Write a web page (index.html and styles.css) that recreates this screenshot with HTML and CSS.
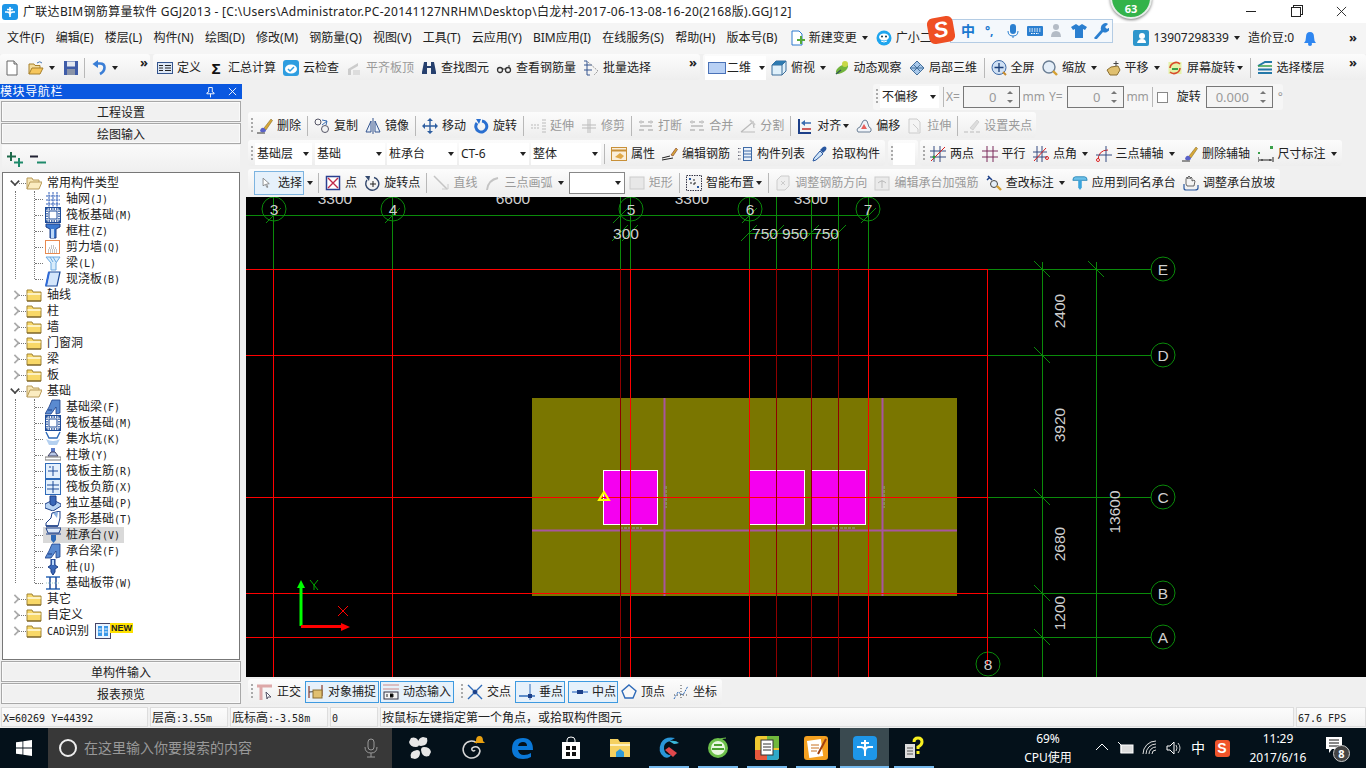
FILE: index.html
```html
<!DOCTYPE html>
<html>
<head>
  <title>广联达BIM钢筋算量软件 GGJ2013</title>
  <meta charset="UTF-8">
  <link rel="stylesheet" href="styles.css">
</head>
<body>
  <svg class="sprite" xmlns="http://www.w3.org/2000/svg">
    <!-- toolbar icons -->
    <symbol id="i-app" viewBox="0 0 16 16"><rect width="16" height="16" rx="3" fill="#1e96e8"/><path d="M8 3v10M3 8h2q3 0 3 3M13 8h-2q-3 0-3 3M5 5.500h6" stroke="#fff" stroke-width="1.600" fill="none"/></symbol>
    <symbol id="i-new" viewBox="0 0 16 16"><path d="M3 1h7l3 3v11H3z" fill="#fff" stroke="#666"/><path d="M10 1v3h3" fill="#ddd" stroke="#666"/></symbol>
    <symbol id="i-open" viewBox="0 0 16 16"><path d="M1 14V4h5l1 1.500h5V8" fill="#f3dc9c" stroke="#a8802a"/><path d="M1 14l3-6h11l-3 6z" fill="#f6c65c" stroke="#a8802a"/><path d="M9 3q3-2.500 5 0" stroke="#4a78b0" fill="none"/></symbol>
    <symbol id="i-save" viewBox="0 0 16 16"><rect x="1" y="1" width="14" height="14" fill="#3f5ca8"/><rect x="4" y="1.500" width="8" height="5" fill="#e4e8f0"/><rect x="4" y="9" width="8" height="6" fill="#8a94a8"/></symbol>
    <symbol id="i-undo" viewBox="0 0 16 16"><path d="M6 3.500h3q4.500 0 4.500 4T9 14" stroke="#3a7ed6" stroke-width="2.600" fill="none"/><path d="M7 0L1.500 4 7 8z" fill="#3a7ed6"/></symbol>
    <symbol id="i-define" viewBox="0 0 16 16"><rect x=".5" y="2.500" width="15" height="11" fill="#dce7f5" stroke="#34558f"/><path d="M2 5.500h4M2 8h4M2 10.500h4M8 5.500h6M8 8h6M8 10.500h6" stroke="#222"/></symbol>
    <symbol id="i-cloud" viewBox="0 0 16 16"><rect width="16" height="16" rx="3" fill="#2e9de0"/><ellipse cx="8" cy="9" rx="6" ry="4.500" fill="#fff"/><path d="M5 9l2 2 4-4" stroke="#2e9de0" stroke-width="1.500" fill="none"/></symbol>
    <symbol id="i-flush" viewBox="0 0 16 16"><path d="M2 9l10-6v3L5 10v5H2z" fill="#ccc"/><rect x="7" y="10" width="7" height="5" fill="#ddd"/></symbol>
    <symbol id="i-binoc" viewBox="0 0 16 16"><path d="M3 2h3v4h4V2h3l2 10v2h-5V8H6v6H1v-2z" fill="#26406e"/></symbol>
    <symbol id="i-glass" viewBox="0 0 16 16"><circle cx="4" cy="10" r="2.500" fill="none" stroke="#333" stroke-width="1.300"/><circle cx="12" cy="10" r="2.500" fill="none" stroke="#333" stroke-width="1.300"/><path d="M6 9h4M13 7V5" stroke="#333"/></symbol>
    <symbol id="i-batch" viewBox="0 0 16 16"><path d="M1 1h3v14h3M1 5h8M1 10h8" stroke="#34558f" fill="none"/><path d="M5 2l10 9-4 4" stroke="#999" stroke-dasharray="2 1" fill="none"/></symbol>
    <symbol id="i-2d" viewBox="0 0 18 16"><rect x=".5" y="2.500" width="17" height="11" fill="#b8d0f4" stroke="#4a72b8"/></symbol>
    <symbol id="i-box" viewBox="0 0 16 16"><path d="M1 5l4-4h10v10l-4 4H1z" fill="#dff0fa" stroke="#3b6d99"/><path d="M1 5h10v10M11 5l4-4" stroke="#3b6d99" fill="none"/><path d="M1 5l4-4h10l-4 4z" fill="#2e7ab0"/></symbol>
    <symbol id="i-orbit" viewBox="0 0 16 16"><ellipse cx="8" cy="9" rx="7" ry="3.500" transform="rotate(-35 8 9)" fill="#72b43c"/><circle cx="11" cy="4" r="3" fill="#c8d848"/><path d="M2 14l5-4" stroke="#355" stroke-width="1.500"/></symbol>
    <symbol id="i-local3d" viewBox="0 0 16 16"><path d="M8 1l7 7-7 7-7-7z" fill="#a8c8ea" stroke="#44709c"/><path d="M4.500 4.500l7 7M11.500 4.500l-7 7M1 8h14" stroke="#44709c"/></symbol>
    <symbol id="i-full" viewBox="0 0 16 16"><circle cx="8" cy="7.500" r="7" fill="#cfe0f4" stroke="#3e6aa6"/><path d="M8 3v9M3.500 7.500h9" stroke="#1c3f78" stroke-width="1.300"/><path d="M12 12l3 3" stroke="#c68a2c" stroke-width="2"/></symbol>
    <symbol id="i-zoom" viewBox="0 0 16 16"><circle cx="7" cy="7" r="6" fill="#e4eef8" stroke="#6a7e94" stroke-width="1.400"/><path d="M11 11l4 4" stroke="#d6a030" stroke-width="2.400"/></symbol>
    <symbol id="i-pan" viewBox="0 0 16 16"><path d="M2 10l4-3 7-1 2 4-3 5H5z" fill="#e0c070" stroke="#8a6e30"/><path d="M11 1v5M8.500 3.500h5" stroke="#444"/></symbol>
    <symbol id="i-screen" viewBox="0 0 16 16"><rect x="1.500" y="2" width="13" height="12" fill="#e4f2a8"/><path d="M3 8a6 6 0 0 1 10-4M13 8a6 6 0 0 1-10 4" stroke="#d84a2c" stroke-width="1.600" fill="none"/><path d="M5 9h6" stroke="#3aa04a" stroke-width="2"/></symbol>
    <symbol id="i-floor" viewBox="0 0 16 16"><path d="M1 6l7-4h7M1 9.500h14M1 13h14" stroke="#2478a8" stroke-width="2" fill="none"/><path d="M1 6h14" stroke="#3aa04a" stroke-width="1.500"/></symbol>
    <symbol id="i-brush" viewBox="0 0 16 16"><path d="M7 10L14 1l1.500 1.500L9 12z" fill="#d8a838" stroke="#7a6020" stroke-width=".5"/><path d="M3 13q1-4 4-3l2 2q0 3-5 2z" fill="#5a62c8"/><path d="M0 15h8" stroke="#333"/></symbol>
    <symbol id="i-copy" viewBox="0 0 16 16"><circle cx="4" cy="4" r="3" fill="none" stroke="#556"/><circle cx="11" cy="11" r="3.500" fill="none" stroke="#556"/><path d="M8 2l5 1-1 4M8 7l5-4" stroke="#3a6cb0" fill="none"/></symbol>
    <symbol id="i-mirror" viewBox="0 0 16 16"><path d="M6 3L1 14h5zM10 3l5 11h-5z" fill="#e8f0fa" stroke="#34558f"/><path d="M8 0v16" stroke="#34558f"/></symbol>
    <symbol id="i-move" viewBox="0 0 16 16"><path d="M8 1v14M1 8h14" stroke="#2e5ea0" stroke-width="1.400"/><path d="M8 0l3 3H5zM8 16l3-3H5zM0 8l3-3v6zM16 8l-3-3v6z" fill="#2e5ea0"/></symbol>
    <symbol id="i-rotate" viewBox="0 0 16 16"><path d="M9 3a5.500 5.500 0 1 1-5 2" stroke="#2a6fd0" stroke-width="3" fill="none"/><path d="M3 1l5 0-2 5z" fill="#2a6fd0"/></symbol>
    <symbol id="i-extend" viewBox="0 0 16 16"><path d="M13 1v14M15 1v14M1 7h9M1 10h9" stroke="#bbb" stroke-dasharray="2 1"/></symbol>
    <symbol id="i-trim" viewBox="0 0 16 16"><path d="M7 1v14M9 1v14M1 7h14M1 10h14" stroke="#bbb"/></symbol>
    <symbol id="i-break" viewBox="0 0 16 16"><path d="M1 4h5M10 4h5M1 12h5M10 12h5M2 8h12" stroke="#bbb" stroke-width="1.500"/><path d="M3 2v4M13 2v4" stroke="#ccc"/></symbol>
    <symbol id="i-split" viewBox="0 0 16 16"><path d="M1 14h14M1 14L13 4l1 6" stroke="#bbb" stroke-width="1.200" fill="none"/><path d="M10 2l5 5" stroke="#ccc" stroke-width="2"/></symbol>
    <symbol id="i-align" viewBox="0 0 16 16"><path d="M2 1v14h12" stroke="#1c3f88" stroke-width="2" fill="none"/><path d="M6 5h8" stroke="#3a6cb0" stroke-width="1.500"/><path d="M5 11h9" stroke="#c02a2a" stroke-width="1.500"/><path d="M4 5l4-3v6z" fill="#3a6cb0"/></symbol>
    <symbol id="i-offset" viewBox="0 0 16 16"><path d="M1 12q0-2 3-3l3-6q2-2 4 0l2 6q3 1 2 4l-1 1H2z" fill="#f0f4fa" stroke="#6a7e94"/><path d="M5 11l3-5 3 5z" fill="#e8605c"/></symbol>
    <symbol id="i-stretch" viewBox="0 0 16 16"><path d="M2 1h8l3 3v11H2z" fill="#f4f4f4" stroke="#ccc"/><path d="M6 6l5 5v3" stroke="#ccc" fill="none"/></symbol>
    <symbol id="i-grip" viewBox="0 0 16 16"><path d="M6 10l7-8 2 2-6 8z" fill="#ddd" stroke="#bbb" stroke-width=".5"/><path d="M0 14h4M6 14h4M12 14h4" stroke="#bbb"/></symbol>
    <symbol id="i-attr" viewBox="0 0 16 16"><rect x=".5" y="1.500" width="15" height="13" fill="#faeeda" stroke="#c89038"/><path d="M1 4.500h14" stroke="#c89038" stroke-width="2"/><path d="M4 11l5-4 4 3-3 3z" fill="#e0a848"/></symbol>
    <symbol id="i-editbar" viewBox="0 0 16 16"><path d="M9 9l5-7 1.500 1.500L11 10z" fill="#d8a838" stroke="#7a3020" stroke-width=".6"/><path d="M0 12l8-2M0 14l11-2" stroke="#222"/></symbol>
    <symbol id="i-list" viewBox="0 0 16 16"><path d="M1 2.500h3M1 6h3M1 9.500h3M1 13h3" stroke="#556" stroke-dasharray="1.500 1"/><rect x="6.500" y="1.500" width="8" height="13" fill="#e8f0fa" stroke="#3e6aa6"/><path d="M6.500 5h8M6.500 8h8M6.500 11h8" stroke="#3e6aa6"/></symbol>
    <symbol id="i-pick" viewBox="0 0 16 16"><path d="M1 15l1-3 6-7 3 3-7 6z" fill="#cfe4f8" stroke="#2a58a0"/><path d="M8 4l3-3q2-1 3 0t0 3l-3 3z" fill="#2a58a0"/></symbol>
    <symbol id="i-twopt" viewBox="0 0 16 16"><path d="M4 0v16M10 0v16M0 5h16M0 11h16" stroke="#344a80"/><path d="M1 15L15 1" stroke="#d82020"/><circle cx="4" cy="11" r="1.500" fill="#2a9a3a"/></symbol>
    <symbol id="i-para" viewBox="0 0 16 16"><path d="M5 0v16M11 0v16M0 5h16M0 11h16" stroke="#7a2a5a"/></symbol>
    <symbol id="i-angle" viewBox="0 0 16 16"><path d="M4 0v16M9 0v16M0 6h14M0 11h14" stroke="#344a80"/><path d="M1 15L13 2" stroke="#d82020"/><circle cx="14" cy="12" r="1.500" fill="none" stroke="#d82020"/></symbol>
    <symbol id="i-arc3" viewBox="0 0 16 16"><path d="M2 15q0-11 10-11" stroke="#d82020" fill="none"/><path d="M0 9h16M10 0v16" stroke="#344a80"/><circle cx="2" cy="14" r="1.500" fill="#fff" stroke="#d82020"/></symbol>
    <symbol id="i-dim" viewBox="0 0 16 16"><path d="M0 11v5M15 11v5M1 14h13" stroke="#222"/><rect x="0" y="6" width="2" height="2" fill="#3aa04a"/><rect x="12" y="0" width="3" height="3" fill="#3aa04a"/><path d="M5 14l-2 0M11 14h2" stroke="#222"/></symbol>
    <symbol id="i-cursor" viewBox="0 0 16 16"><path d="M3 1l9 8-4 .5 2 4.500-1.500.5-2-4.500L3 12z" fill="#fff" stroke="#666"/></symbol>
    <symbol id="i-point" viewBox="0 0 16 16"><rect x="1.500" y="1.500" width="13" height="13" fill="#fff" stroke="#2a3f90" stroke-width="1.500"/><path d="M3 3l10 10M13 3L3 13" stroke="#c02a4a" stroke-width="1.400"/></symbol>
    <symbol id="i-rotpt" viewBox="0 0 16 16"><path d="M10 2.500a6.500 6.500 0 1 1-7 2.500" stroke="#34496e" stroke-width="1.400" fill="none"/><path d="M1 1l5 0-1 5z" fill="#34496e"/><path d="M9 6v6M6 9h6" stroke="#222"/></symbol>
    <symbol id="i-line" viewBox="0 0 16 16"><path d="M1 1l13 13" stroke="#c4c4c4" stroke-width="1.500"/><path d="M9 14h6V9" stroke="#ccc" fill="none"/></symbol>
    <symbol id="i-arc" viewBox="0 0 16 16"><path d="M2 15q1-10 11-12" stroke="#c4c4c4" stroke-width="2" fill="none"/></symbol>
    <symbol id="i-rect" viewBox="0 0 16 16"><rect x="1" y="2" width="14" height="12" fill="#e8e8e8" stroke="#ccc"/></symbol>
    <symbol id="i-smart" viewBox="0 0 16 16"><rect x=".5" y=".5" width="15" height="15" fill="#f4f4f4" stroke="#334" stroke-dasharray="1.500 1"/><path d="M8 4v8M4 8h8" stroke="#222" stroke-dasharray="2 2"/><rect x="3" y="3" width="2" height="2" fill="#2a58a0"/><rect x="11" y="11" width="2" height="2" fill="#2a58a0"/></symbol>
    <symbol id="i-adjust" viewBox="0 0 16 16"><path d="M2 5l4-4h8v10l-4 4H2z" fill="#eee" stroke="#ccc"/><path d="M6 6l4 4M10 6l-4 4" stroke="#ccc"/></symbol>
    <symbol id="i-editcap" viewBox="0 0 16 16"><rect x="1" y="2" width="14" height="13" fill="#eaeaea" stroke="#ccc"/><path d="M8 5v8M4 8q4-4 8 0" stroke="#bbb" fill="none"/></symbol>
    <symbol id="i-check" viewBox="0 0 16 16"><path d="M2 1l4 4M1 5l3-3" stroke="#1c3f88" stroke-width="1.500"/><circle cx="8" cy="9" r="3.500" fill="#e4eef8" stroke="#444"/><path d="M11 11l4 4" stroke="#d6a030" stroke-width="2.400"/></symbol>
    <symbol id="i-apply" viewBox="0 0 18 16"><path d="M1 5q0-4 3-4h10q3 0 3 4z" fill="#6cc0e8" stroke="#2a86b8"/><path d="M7 5h4v8l-2 3-2-3z" fill="#3aa4dc"/></symbol>
    <symbol id="i-hand" viewBox="0 0 16 16"><path d="M3 9V4l1-2 1 2V2l1-1 1 1v2l1-2 1 1v3l2-1 1 1-1 5H4z" fill="#f4f4f4" stroke="#444" stroke-width=".8"/><path d="M1 9v4q0 2 2 2h9q3 0 3-2v-3" stroke="#2a58a0" stroke-width="1.200" fill="none"/></symbol>
    <symbol id="i-ortho" viewBox="0 0 16 16"><path d="M0 2h15M4 2v14" stroke="#dda8a8" stroke-width="3"/><path d="M9 8l5 5-3 0-1 2z" fill="#fff" stroke="#556"/></symbol>
    <symbol id="i-snap" viewBox="0 0 16 16"><path d="M1 2v12M14 1v11" stroke="#8a3a2a" stroke-width="1.200"/><path d="M1 8l13-1" stroke="#444"/><rect x="5" y="6" width="9" height="8" fill="#e0c070" stroke="#8a6e30"/></symbol>
    <symbol id="i-dyn" viewBox="0 0 16 16"><path d="M0 1h16M0 5h16" stroke="#c88"/><rect x="1" y="8" width="14" height="7" fill="#f4f4f4" stroke="#334"/><path d="M4 10v3M7 10h3v3h-3" stroke="#222"/></symbol>
    <symbol id="i-cross" viewBox="0 0 16 16"><path d="M1 1l14 14M15 1L1 15" stroke="#2e6ab8" stroke-width="1.400"/><rect x="6" y="6" width="4" height="4" fill="#1c3f88" transform="rotate(45 8 8)"/></symbol>
    <symbol id="i-perp" viewBox="0 0 16 16"><path d="M0 12h16" stroke="#2e6ab8" stroke-width="1.500"/><path d="M11 0v16" stroke="#2e6ab8"/><rect x="9" y="10" width="4" height="4" fill="#1c3f88"/></symbol>
    <symbol id="i-mid" viewBox="0 0 16 16"><path d="M0 8h16" stroke="#5a8ad0" stroke-width="1.500"/><rect x="5" y="6" width="6" height="4" fill="#1c3f88"/></symbol>
    <symbol id="i-vertex" viewBox="0 0 16 16"><path d="M8 1l7 6-3 7H4L1 7z" fill="#f8f8f8" stroke="#2e6ab8" stroke-width="1.400"/></symbol>
    <symbol id="i-coord" viewBox="0 0 16 16"><path d="M1 15l4-7 5 3 5-9" stroke="#2e6ab8" stroke-dasharray="2 1" fill="none"/><path d="M8 1v15M1 11h14" stroke="#444" stroke-dasharray="1 2"/></symbol>
    <symbol id="i-pages" viewBox="0 0 16 16"><path d="M3 1h7l3 3v11H3z" fill="#fff" stroke="#2e7ad0"/><path d="M8 9h3V6h2v3h3v2h-3v3h-2v-3H8z" fill="#56a83a"/></symbol>
    <symbol id="i-robot" viewBox="0 0 16 16"><circle cx="8" cy="8" r="7.500" fill="#1ea5ee"/><ellipse cx="8" cy="7" rx="5" ry="3.500" fill="#fff"/><circle cx="6" cy="6.500" r="1" fill="#134"/><circle cx="10" cy="6.500" r="1" fill="#134"/><path d="M5 11q3 2 6 0" stroke="#fff" fill="none"/></symbol>
    <symbol id="i-user" viewBox="0 0 16 16"><rect width="16" height="16" rx="2" fill="#2e96cc"/><circle cx="9" cy="6" r="3" fill="#fff"/><path d="M4 13q1-4 5-4t4 4z" fill="#fff"/></symbol>
    <symbol id="i-bell" viewBox="0 0 16 16"><path d="M2 13q2-2 2-6 0-5 4-5t4 5q0 4 2 6z" fill="#2e86f0"/><circle cx="8" cy="14" r="2" fill="#2e86f0"/></symbol>
    <symbol id="i-plus2" viewBox="0 0 16 16"><path d="M4 1v9M0 5.500h9" stroke="#1e6a4a" stroke-width="2"/><path d="M12 7v9M7 11.500h9" stroke="#1e8a6a" stroke-width="2"/></symbol>
    <symbol id="i-minus2" viewBox="0 0 16 16"><path d="M0 5.500h8" stroke="#223" stroke-width="2"/><path d="M7 11.500h9" stroke="#1e8a6a" stroke-width="2"/></symbol>
    <!-- tree icons -->
    <symbol id="t-open" viewBox="0 0 16 16"><path d="M1 14V3h5l1 2h6v2" fill="#f7e6b4" stroke="#b89a58"/><path d="M1 14l3-7h12l-3 7z" fill="#fbecc0" stroke="#b89a58"/></symbol>
    <symbol id="t-folder" viewBox="0 0 16 16"><path d="M1 3h5l1 2h8v9H1z" fill="#f8d868" stroke="#a08438"/><path d="M1.500 6h13v2h-13z" fill="#fdf2c4"/><path d="M1 14h14" stroke="#6a5420"/></symbol>
    <symbol id="t-grid" viewBox="0 0 16 16"><path d="M1 5h14M1 9h14M1 13h14M4 1v15M8 1v15M12 1v15" stroke="#2e5cb8" stroke-dasharray="2 .5"/></symbol>
    <symbol id="t-raft" viewBox="0 0 16 16"><rect x=".5" y=".5" width="15" height="15" fill="#fff" stroke="#1c4a98"/><rect x="4" y="4" width="8" height="8" fill="#fff" stroke="#1c4a98"/><path d="M2 1v14M14 1v14M1 2h14M1 14h14" stroke="#1c4a98" stroke-width="1.400" stroke-dasharray="1.500 1"/></symbol>
    <symbol id="t-col" viewBox="0 0 16 16"><path d="M1 1h14v3l-4 2v9H5V6L1 4z" fill="#3a78d0" stroke="#1c3f88"/><path d="M6 6h3v9H6z" fill="#bcd8f8"/></symbol>
    <symbol id="t-wall" viewBox="0 0 16 16"><rect x=".5" y="1.500" width="14" height="13" fill="#fff" stroke="#e88a50"/><path d="M3 11h9M4 9h7M6 7h3M3 13h10" stroke="#888" stroke-dasharray="1 1"/></symbol>
    <symbol id="t-beam" viewBox="0 0 16 16"><path d="M1 2h14L11 8v7H6V8z" fill="#d8ecfb" stroke="#6aa8e0"/><path d="M8 2l3 5M5 2l3 5" stroke="#6aa8e0"/></symbol>
    <symbol id="t-slab" viewBox="0 0 16 16"><path d="M4 1h11l-3 14H1z" fill="#d4e6fb" stroke="#1c4a98" stroke-width="1.200"/><path d="M1 15L4 1" stroke="#2e6ad8" stroke-width="2"/></symbol>
    <symbol id="t-fbeam" viewBox="0 0 16 16"><path d="M0 15l4-7 3-7h8v13l-4 1V8L6 15z" fill="#5a8ad0" stroke="#1c3f88" stroke-width=".8"/><path d="M3 11h4" stroke="#1c3f88"/></symbol>
    <symbol id="t-pit" viewBox="0 0 16 16"><path d="M1 1l3 6h8l3-6" stroke="#2e6ab8" stroke-width="1.400" fill="none"/><path d="M1 8q7 4 14 0l-3 6H4z" fill="#b4d0f0"/></symbol>
    <symbol id="t-pier" viewBox="0 0 16 16"><path d="M6 1h4v4H6z" fill="#5a7ac8"/><path d="M3 9l3-4h4l3 4z" fill="#b8c8e8" stroke="#446"/><path d="M0 10h16v3H0z" fill="#fff" stroke="#777"/></symbol>
    <symbol id="t-rmain" viewBox="0 0 16 16"><rect x=".5" y=".5" width="15" height="15" fill="#e4f0fc" stroke="#2e6ab8"/><path d="M8 3v10M3 8h10M5 3v2" stroke="#1c4a98"/></symbol>
    <symbol id="t-rneg" viewBox="0 0 16 16"><rect x=".5" y=".5" width="15" height="15" fill="#e4f0fc" stroke="#2e6ab8"/><path d="M8 2v12M2 6h12M2 10h12" stroke="#1c4a98"/></symbol>
    <symbol id="t-iso" viewBox="0 0 16 16"><path d="M0 9l8-4 8 4v2l-8 5-8-3z" fill="#b8d4f4" stroke="#1c3f88"/><path d="M5 1h6v8l-3 2-3-2z" fill="#3a68b8" stroke="#1c3f88"/></symbol>
    <symbol id="t-strip" viewBox="0 0 16 16"><path d="M1 15v-3l5-5 1-5 8-2v7l-2 8z" fill="#fff" stroke="#1c3f88"/><path d="M8 2l5-1-1 6z" fill="#8ab0e0"/><path d="M1 15h12" stroke="#1c3f88" stroke-width="1.500"/></symbol>
    <symbol id="t-cap" viewBox="0 0 16 16"><path d="M1 1h15l-2 5H3z" fill="#dbe8f8" stroke="#1c3f88"/><path d="M1 7h15" stroke="#1c3f88"/><path d="M6 8h5v5l-2.500 3L6 13z" fill="#2e6ab8"/></symbol>
    <symbol id="t-pile" viewBox="0 0 16 16"><path d="M6 0h4v6l3 2-3 2v3l-2 3-2-3v-3L3 8l3-2z" fill="#3a68b8" stroke="#1c3f88"/><path d="M7 1h2v5H7z" fill="#bcd8f8"/></symbol>
    <symbol id="t-band" viewBox="0 0 16 16"><path d="M1 2h14M1 14h14" stroke="#2e6ab8" stroke-width="1.500"/><path d="M5 2v12M11 2v12" stroke="#1c4a98" stroke-width="1.500"/><path d="M1 8h14" stroke="#9cc" stroke-dasharray="1 1"/></symbol>
    <symbol id="t-cad" viewBox="0 0 16 16"><rect x=".5" y=".5" width="15" height="15" fill="#eaf4ff" stroke="#446"/><rect x="3" y="3" width="4" height="10" fill="#3a98e8"/><rect x="9" y="3" width="4" height="10" fill="#3a98e8"/><path d="M3.500 6h3M3.500 9h3M9.500 6h3M9.500 9h3" stroke="#fff"/></symbol>
    <!-- taskbar icons -->
    <symbol id="b-fan" viewBox="0 0 24 24"><path d="M4 2q7-2 8 6 0 3-3 3Q3 11 2 6zM20 2q2 7-6 8-3 0-3-3 0-5 5-6zM22 20q-7 2-8-6 0-3 3-3 6 0 7 5zM4 22q-2-7 6-8 3 0 3 3 0 5-5 6z" fill="#e6e6e6"/></symbol>
    <symbol id="b-swirl" viewBox="0 0 24 24"><path d="M16 7a8.500 8.500 0 1 0 3 8q-1-5-6-4-3 1-2 3 2 2 3 0" stroke="#d8d8d8" stroke-width="1.500" fill="none"/><path d="M14 10q0-5 3.500-5T21 10l2 2H12z" fill="#e8a010" transform="translate(1 -5)"/></symbol>
    <symbol id="b-edge" viewBox="0 0 24 24"><path d="M2 13Q2 2 13 2q10 0 10 12H8q1 5 6 5 4 0 7-2v4q-3 2-8 2Q2 23 2 13zm6-3h9q0-4-4-4-4 0-5 4z" fill="#0a78d8"/></symbol>
    <symbol id="b-store" viewBox="0 0 24 24"><path d="M8 6V4q0-3 4-3t4 3v2" stroke="#fff" fill="none"/><path d="M3 6h18v17H3z" fill="#fff"/><path d="M7 10h4v4H7zM13 10h4v4h-4zM7 16h4v4H7zM13 16h4v4h-4z" fill="#111"/></symbol>
    <symbol id="b-files" viewBox="0 0 24 24"><path d="M2 3h8l2 3h10v15H2z" fill="#f4d060"/><path d="M2 8h20v2H2z" fill="#fdf0c0"/><path d="M8 21v-5l4-3 4 3v5z" fill="#2e9ad8"/></symbol>
    <symbol id="b-gl" viewBox="0 0 24 24"><path d="M18 2q-10-2-14 5-4 9 3 14 5 2 7-2-6 0-7-6-1-6 6-8z" fill="#2a96d8"/><path d="M8 14l8 7 4-4-8-6z" fill="#e0484c"/><path d="M12 5q7-1 10 2-3 1-5 1z" fill="#3ab8d8"/></symbol>
    <symbol id="b-ie" viewBox="0 0 24 24"><circle cx="12" cy="12" r="10" fill="#6cc04a"/><circle cx="12" cy="12" r="7" fill="#e8f8e0"/><path d="M6 13h12M8 9h8" stroke="#4aa030" stroke-width="2"/><path d="M20 2q-4 0-8 2" stroke="#6cc04a" fill="none"/></symbol>
    <symbol id="b-pic" viewBox="0 0 24 24"><rect width="24" height="24" rx="3" fill="#f0c830"/><path d="M0 14h12v10H3q-3 0-3-3z" fill="#e8583c"/><path d="M12 14h12v7q0 3-3 3h-9z" fill="#2ea8c8"/><path d="M12 0h12v12H12z" fill="#70b83c"/><rect x="6" y="4" width="12" height="15" fill="#fff" stroke="#333"/><path d="M8 8h8M8 11h8M8 14h8" stroke="#333"/></symbol>
    <symbol id="b-notes" viewBox="0 0 24 24"><rect width="24" height="24" rx="3" fill="#f4a020"/><rect x="4" y="4" width="14" height="17" fill="#fff" transform="rotate(-8 11 12)"/><path d="M7 9h8M7 12h8M7 15h6" stroke="#c87020"/><path d="M14 18L22 3" stroke="#a04010" stroke-width="2"/></symbol>
    <symbol id="b-app" viewBox="0 0 24 24"><rect width="24" height="24" rx="4" fill="#1e96e8"/><path d="M12 4v16M4 11h4q4 0 4 5 0-5 4-5h4M8 7h8" stroke="#fff" stroke-width="2" fill="none"/></symbol>
    <symbol id="b-help" viewBox="0 0 24 24"><rect x="3" y="8" width="10" height="14" fill="#ddd"/><path d="M5 12h6M5 15h6M5 18h6" stroke="#555"/><path d="M12 6q0-4 4-4t4 4q0 3-4 5v2" stroke="#f8f020" stroke-width="3" fill="none"/><rect x="14.500" y="15" width="3" height="3" fill="#f8f020"/></symbol>
  </svg>

  <div class="title-bar">
    <svg class="ic title-icon"><use href="#i-app"/></svg>
    <span class="title-text">广联达BIM钢筋算量软件 GGJ2013 - [C:\Users\Administrator.PC-20141127NRHM\Desktop\白龙村-2017-06-13-08-16-20(2168版).GGJ12]</span>
    <div class="win-controls">
      <span class="win-min"></span>
      <span class="win-max"></span>
      <svg class="win-close" viewBox="0 0 12 12"><path d="M1 1l10 10M11 1L1 11" stroke="#222"/></svg>
    </div>
  </div>

  <div class="score-badge"><span>63</span></div>

  <div class="menu-bar">
    <span class="menu-item">文件(F)</span>
    <span class="menu-item">编辑(E)</span>
    <span class="menu-item">楼层(L)</span>
    <span class="menu-item">构件(N)</span>
    <span class="menu-item">绘图(D)</span>
    <span class="menu-item">修改(M)</span>
    <span class="menu-item">钢筋量(Q)</span>
    <span class="menu-item">视图(V)</span>
    <span class="menu-item">工具(T)</span>
    <span class="menu-item">云应用(Y)</span>
    <span class="menu-item">BIM应用(I)</span>
    <span class="menu-item">在线服务(S)</span>
    <span class="menu-item">帮助(H)</span>
    <span class="menu-item">版本号(B)</span>
    <span class="tool"><svg class="ic"><use href="#i-pages"/></svg>新建变更<i class="caret"></i></span>
    <span class="tool"><svg class="ic"><use href="#i-robot"/></svg>广小二</span>
    <div class="menu-right">
      <span class="tool"><svg class="ic"><use href="#i-user"/></svg>13907298339<i class="caret"></i></span>
      <span class="tool">造价豆:0</span>
      <svg class="ic bell"><use href="#i-bell"/></svg>
      <span class="more">»</span>
    </div>
  </div>

  <div class="ime-bar">
    <span class="ime-logo">S</span>
    <span class="ime-zh">中</span>
    <span class="ime-dot">°,</span>
    <svg class="ime-ic" viewBox="0 0 16 16"><rect x="5" y="1" width="6" height="10" rx="3" fill="#2a7fd0"/><path d="M3 8q0 5 5 5t5-5M8 13v2" stroke="#2a7fd0" fill="none"/></svg>
    <svg class="ime-ic" viewBox="0 0 16 16"><rect y="3" width="16" height="10" rx="1" fill="#2a7fd0"/><path d="M2 6h12M2 8h12M4 10.500h8" stroke="#fff" stroke-dasharray="1.500 1"/></svg>
    <svg class="ime-ic" viewBox="0 0 16 16"><circle cx="7" cy="4" r="3" fill="#b4bcc6"/><path d="M2 14q0-6 5-6t5 6z" fill="#b4bcc6"/></svg>
    <svg class="ime-ic" viewBox="0 0 16 16"><path d="M5 1L0 4l2 3 2-1v9h8V6l2 1 2-3-5-3-3 2z" fill="#2a7fd0"/></svg>
    <svg class="ime-ic" viewBox="0 0 16 16"><path d="M1 15l7-8q-1-4 2-6t5 0l-3 3 2 2 3-2q0 4-3 5-2 1-4 0l-7 8z" fill="#2a7fd0"/></svg>
  </div>

  <div class="tool-row">
    <div class="tool-group group-file">
      <svg class="ic"><use href="#i-new"/></svg>
      <span class="tool"><svg class="ic"><use href="#i-open"/></svg><i class="caret"></i></span>
      <svg class="ic"><use href="#i-save"/></svg>
      <i class="sep"></i>
      <span class="tool"><svg class="ic"><use href="#i-undo"/></svg><i class="caret"></i></span>
      <span class="more">»</span>
    </div>
    <div class="tool-group group-main">
      <span class="tool"><svg class="ic"><use href="#i-define"/></svg>定义</span>
      <span class="tool"><span class="sigma">Σ</span>汇总计算</span>
      <span class="tool"><svg class="ic"><use href="#i-cloud"/></svg>云检查</span>
      <span class="tool off"><svg class="ic"><use href="#i-flush"/></svg>平齐板顶</span>
      <span class="tool"><svg class="ic"><use href="#i-binoc"/></svg>查找图元</span>
      <span class="tool"><svg class="ic"><use href="#i-glass"/></svg>查看钢筋量</span>
      <span class="tool"><svg class="ic"><use href="#i-batch"/></svg>批量选择</span>
      <span class="more">»</span>
    </div>
    <div class="tool-group group-view">
      <span class="view-combo"><svg class="ic wide"><use href="#i-2d"/></svg>二维<i class="caret"></i></span>
      <span class="tool"><svg class="ic"><use href="#i-box"/></svg>俯视<i class="caret"></i></span>
      <span class="tool"><svg class="ic"><use href="#i-orbit"/></svg>动态观察</span>
      <span class="tool"><svg class="ic"><use href="#i-local3d"/></svg>局部三维</span>
      <i class="sep"></i>
      <span class="tool"><svg class="ic"><use href="#i-full"/></svg>全屏</span>
      <span class="tool"><svg class="ic"><use href="#i-zoom"/></svg>缩放<i class="caret"></i></span>
      <span class="tool"><svg class="ic"><use href="#i-pan"/></svg>平移<i class="caret"></i></span>
      <span class="tool"><svg class="ic"><use href="#i-screen"/></svg>屏幕旋转<i class="caret tight"></i></span>
      <i class="sep"></i>
      <span class="tool"><svg class="ic"><use href="#i-floor"/></svg>选择楼层</span>
      <span class="more">»</span>
    </div>
  </div>

  <div class="workspace">
    <div class="nav-panel">
      <div class="nav-head">
        <span>模块导航栏</span>
        <svg class="nav-pin" viewBox="0 0 10 12"><path d="M3 1h4v5l2 1v1H1V7l2-1zM5 8v4" stroke="#fff" fill="none"/></svg>
        <svg class="nav-close" viewBox="0 0 10 10"><path d="M1 1l8 8M9 1L1 9" stroke="#fff"/></svg>
      </div>
      <div class="nav-btn">工程设置</div>
      <div class="nav-btn">绘图输入</div>
      <div class="tree-tools">
        <svg class="ic"><use href="#i-plus2"/></svg>
        <svg class="ic"><use href="#i-minus2"/></svg>
      </div>
      <div class="tree">
        <div class="tree-row"><i class="chev down"></i><i class="dots"></i><svg class="ic"><use href="#t-open"/></svg><span>常用构件类型</span></div>
        <div class="tree-kids">
          <div class="tree-leaf"><span class="leaf-body"><svg class="ic"><use href="#t-grid"/></svg><span>轴网<span class="lat">(J)</span></span></span></div>
          <div class="tree-leaf"><span class="leaf-body"><svg class="ic"><use href="#t-raft"/></svg><span>筏板基础<span class="lat">(M)</span></span></span></div>
          <div class="tree-leaf"><span class="leaf-body"><svg class="ic"><use href="#t-col"/></svg><span>框柱<span class="lat">(Z)</span></span></span></div>
          <div class="tree-leaf"><span class="leaf-body"><svg class="ic"><use href="#t-wall"/></svg><span>剪力墙<span class="lat">(Q)</span></span></span></div>
          <div class="tree-leaf"><span class="leaf-body"><svg class="ic"><use href="#t-beam"/></svg><span>梁<span class="lat">(L)</span></span></span></div>
          <div class="tree-leaf"><span class="leaf-body"><svg class="ic"><use href="#t-slab"/></svg><span>现浇板<span class="lat">(B)</span></span></span></div>
        </div>
        <div class="tree-row"><i class="chev"></i><i class="dots"></i><svg class="ic"><use href="#t-folder"/></svg><span>轴线</span></div>
        <div class="tree-row"><i class="chev"></i><i class="dots"></i><svg class="ic"><use href="#t-folder"/></svg><span>柱</span></div>
        <div class="tree-row"><i class="chev"></i><i class="dots"></i><svg class="ic"><use href="#t-folder"/></svg><span>墙</span></div>
        <div class="tree-row"><i class="chev"></i><i class="dots"></i><svg class="ic"><use href="#t-folder"/></svg><span>门窗洞</span></div>
        <div class="tree-row"><i class="chev"></i><i class="dots"></i><svg class="ic"><use href="#t-folder"/></svg><span>梁</span></div>
        <div class="tree-row"><i class="chev"></i><i class="dots"></i><svg class="ic"><use href="#t-folder"/></svg><span>板</span></div>
        <div class="tree-row"><i class="chev down"></i><i class="dots"></i><svg class="ic"><use href="#t-open"/></svg><span>基础</span></div>
        <div class="tree-kids">
          <div class="tree-leaf"><span class="leaf-body"><svg class="ic"><use href="#t-fbeam"/></svg><span>基础梁<span class="lat">(F)</span></span></span></div>
          <div class="tree-leaf"><span class="leaf-body"><svg class="ic"><use href="#t-raft"/></svg><span>筏板基础<span class="lat">(M)</span></span></span></div>
          <div class="tree-leaf"><span class="leaf-body"><svg class="ic"><use href="#t-pit"/></svg><span>集水坑<span class="lat">(K)</span></span></span></div>
          <div class="tree-leaf"><span class="leaf-body"><svg class="ic"><use href="#t-pier"/></svg><span>柱墩<span class="lat">(Y)</span></span></span></div>
          <div class="tree-leaf"><span class="leaf-body"><svg class="ic"><use href="#t-rmain"/></svg><span>筏板主筋<span class="lat">(R)</span></span></span></div>
          <div class="tree-leaf"><span class="leaf-body"><svg class="ic"><use href="#t-rneg"/></svg><span>筏板负筋<span class="lat">(X)</span></span></span></div>
          <div class="tree-leaf"><span class="leaf-body"><svg class="ic"><use href="#t-iso"/></svg><span>独立基础<span class="lat">(P)</span></span></span></div>
          <div class="tree-leaf"><span class="leaf-body"><svg class="ic"><use href="#t-strip"/></svg><span>条形基础<span class="lat">(T)</span></span></span></div>
          <div class="tree-leaf"><span class="leaf-body active"><svg class="ic"><use href="#t-cap"/></svg><span>桩承台<span class="lat">(V)</span></span></span></div>
          <div class="tree-leaf"><span class="leaf-body"><svg class="ic"><use href="#t-fbeam"/></svg><span>承台梁<span class="lat">(F)</span></span></span></div>
          <div class="tree-leaf"><span class="leaf-body"><svg class="ic"><use href="#t-pile"/></svg><span>桩<span class="lat">(U)</span></span></span></div>
          <div class="tree-leaf"><span class="leaf-body"><svg class="ic"><use href="#t-band"/></svg><span>基础板带<span class="lat">(W)</span></span></span></div>
        </div>
        <div class="tree-row"><i class="chev"></i><i class="dots"></i><svg class="ic"><use href="#t-folder"/></svg><span>其它</span></div>
        <div class="tree-row"><i class="chev"></i><i class="dots"></i><svg class="ic"><use href="#t-folder"/></svg><span>自定义</span></div>
        <div class="tree-row"><i class="chev"></i><i class="dots"></i><svg class="ic"><use href="#t-folder"/></svg><span><span class="lat">CAD</span>识别</span><svg class="ic cad-ic"><use href="#t-cad"/></svg><span class="new-tag">NEW</span></div>
      </div>
      <div class="nav-btn">单构件输入</div>
      <div class="nav-btn">报表预览</div>
    </div>

    <div class="work-area">
      <div class="bar-line line-offset">
        <div class="tool-group group-offset">
          <i class="grip"></i>
          <span class="combo combo-offset">不偏移<i class="caret"></i></span>
          <i class="sep"></i>
          <span class="off label-x">X=</span>
          <span class="spin spin-xy">0<i class="spin-arrows"></i></span>
          <span class="off unit">mm</span>
          <span class="off label-y">Y=</span>
          <span class="spin spin-xy">0<i class="spin-arrows"></i></span>
          <span class="off unit">mm</span>
          <i class="sep"></i>
          <i class="check-box"></i>
          <span class="rotate-label">旋转</span>
          <span class="spin spin-rot">0.000<i class="spin-arrows"></i></span>
          <span class="off">°</span>
        </div>
      </div>

      <div class="bar-line">
        <div class="tool-group group-edit">
          <i class="grip"></i>
          <span class="tool"><svg class="ic"><use href="#i-brush"/></svg>删除</span>
          <i class="sep"></i>
          <span class="tool"><svg class="ic"><use href="#i-copy"/></svg>复制</span>
          <span class="tool"><svg class="ic"><use href="#i-mirror"/></svg>镜像</span>
          <i class="sep"></i>
          <span class="tool"><svg class="ic"><use href="#i-move"/></svg>移动</span>
          <span class="tool"><svg class="ic"><use href="#i-rotate"/></svg>旋转</span>
          <i class="sep"></i>
          <span class="tool off"><svg class="ic"><use href="#i-extend"/></svg>延伸</span>
          <span class="tool off"><svg class="ic"><use href="#i-trim"/></svg>修剪</span>
          <i class="sep"></i>
          <span class="tool off"><svg class="ic"><use href="#i-break"/></svg>打断</span>
          <span class="tool off"><svg class="ic"><use href="#i-break"/></svg>合并</span>
          <span class="tool off"><svg class="ic"><use href="#i-split"/></svg>分割</span>
          <i class="sep"></i>
          <span class="tool"><svg class="ic"><use href="#i-align"/></svg>对齐<i class="caret tight"></i></span>
          <span class="tool"><svg class="ic"><use href="#i-offset"/></svg>偏移</span>
          <span class="tool off"><svg class="ic"><use href="#i-stretch"/></svg>拉伸</span>
          <i class="sep"></i>
          <span class="tool off"><svg class="ic"><use href="#i-grip"/></svg>设置夹点</span>
        </div>
      </div>

      <div class="bar-line">
        <div class="tool-group group-type">
          <i class="grip"></i>
          <span class="combo combo-floor">基础层<i class="caret"></i></span>
          <span class="combo combo-wide">基础<i class="caret"></i></span>
          <span class="combo combo-wide">桩承台<i class="caret"></i></span>
          <span class="combo combo-wide">CT-6<i class="caret"></i></span>
          <span class="combo combo-wide">整体<i class="caret"></i></span>
          <i class="sep"></i>
          <span class="tool"><svg class="ic"><use href="#i-attr"/></svg>属性</span>
          <span class="tool"><svg class="ic"><use href="#i-editbar"/></svg>编辑钢筋</span>
          <span class="tool"><svg class="ic"><use href="#i-list"/></svg>构件列表</span>
          <span class="tool"><svg class="ic"><use href="#i-pick"/></svg>拾取构件</span>
        </div>
        <div class="tool-group group-blank"><i class="grip"></i><span class="blank-box"></span></div>
        <div class="tool-group group-axis">
          <i class="grip"></i>
          <span class="tool"><svg class="ic"><use href="#i-twopt"/></svg>两点</span>
          <span class="tool"><svg class="ic"><use href="#i-para"/></svg>平行</span>
          <span class="tool"><svg class="ic"><use href="#i-angle"/></svg>点角<i class="caret"></i></span>
          <span class="tool"><svg class="ic"><use href="#i-arc3"/></svg>三点辅轴<i class="caret"></i></span>
          <span class="tool"><svg class="ic"><use href="#i-brush"/></svg>删除辅轴</span>
          <span class="tool"><svg class="ic"><use href="#i-dim"/></svg>尺寸标注<i class="caret"></i></span>
        </div>
      </div>

      <div class="bar-line line-draw">
        <div class="tool-group group-draw">
          <span class="tool pressed select-btn"><svg class="ic"><use href="#i-cursor"/></svg>选择</span>
          <i class="caret select-caret"></i>
          <i class="sep"></i>
          <span class="tool"><svg class="ic"><use href="#i-point"/></svg>点</span>
          <span class="tool"><svg class="ic"><use href="#i-rotpt"/></svg>旋转点</span>
          <i class="sep"></i>
          <span class="tool off"><svg class="ic"><use href="#i-line"/></svg>直线</span>
          <span class="tool off"><svg class="ic"><use href="#i-arc"/></svg>三点画弧<i class="caret"></i></span>
          <span class="combo-box"><i class="caret"></i></span>
          <span class="tool off"><svg class="ic"><use href="#i-rect"/></svg>矩形</span>
          <i class="sep"></i>
          <span class="tool"><svg class="ic"><use href="#i-smart"/></svg>智能布置<i class="caret tight"></i></span>
          <i class="sep"></i>
          <span class="tool off"><svg class="ic"><use href="#i-adjust"/></svg>调整钢筋方向</span>
          <span class="tool off"><svg class="ic"><use href="#i-editcap"/></svg>编辑承台加强筋</span>
          <span class="tool"><svg class="ic"><use href="#i-check"/></svg>查改标注<i class="caret"></i></span>
          <span class="tool"><svg class="ic"><use href="#i-apply"/></svg>应用到同名承台</span>
          <span class="tool"><svg class="ic"><use href="#i-hand"/></svg>调整承台放坡</span>
        </div>
      </div>

      <svg class="cad" viewBox="246 197 1120 480" xmlns="http://www.w3.org/2000/svg">
        <rect x="246" y="197" width="1120" height="480" fill="#000"/>
        <text class="cad-text" x="335" y="204">3300</text>
        <text class="cad-text" x="513" y="204">6600</text>
        <text class="cad-text" x="692" y="204">3300</text>
        <text class="cad-text" x="811" y="204">3300</text>

        <rect x="532" y="398" width="425" height="198" fill="#7a7600"/>
        <path d="M664.500 398v198M882.500 398v198M532 530.500h425" stroke="#a8559f" stroke-width="2"/>
        <path d="M666 486v22M884 486v22M620 528h22M832 528h23" stroke="#8a8a50" stroke-width="2" stroke-dasharray="3 1"/>
        <rect class="cad-pile" x="603.500" y="470.500" width="54" height="54"/>
        <rect class="cad-pile" x="749.500" y="470.500" width="55" height="54"/>
        <rect class="cad-pile" x="811.500" y="470.500" width="54" height="54"/>

        <g class="cad-green">
          <path d="M273.500 197v72M392.500 197v72M620.500 197v72M630.500 197v72M749.500 197v72M776.500 197v72M811.500 197v72M838.500 197v72M868.500 197v72"/>
          <path d="M246 215.500h622M749 233.500h90"/>
          <path d="M1042.500 262v415M1096.500 262v415"/>
          <path d="M988 269.500h163M988 355.500h163M988 497.500h163M988 593.500h163M988 637.500h163"/>
          <path d="M266 223l15-15M385 223l15-15M613 223l15-15M742 223l15-15M861 223l15-15"/>
          <path d="M612 241l16-16M622 241l16-16M741 241l16-16M768 241l16-16M803 241l16-16M830 241l16-16"/>
          <path d="M1034 261l16 16M1088 261l16 16M1034 347l16 16M1034 489l16 16M1034 585l16 16M1034 629l16 16"/>
          <circle cx="274" cy="209" r="12"/><circle cx="393" cy="209" r="12"/><circle cx="631" cy="209" r="12"/><circle cx="750" cy="209" r="12"/><circle cx="868" cy="209" r="12"/>
          <circle cx="1163" cy="269" r="12"/><circle cx="1163" cy="355" r="12"/><circle cx="1163" cy="497" r="12"/><circle cx="1163" cy="593" r="12"/><circle cx="1163" cy="637" r="12"/>
          <circle cx="988" cy="664" r="12"/>
        </g>
        <g class="cad-red">
          <path d="M273.500 269v408M392.500 269v408M630.500 269v408M749.500 269v408M868.500 269v408"/>
          <path d="M246 269.500h742M246 355.500h742M246 497.500h742M246 593.500h742M246 637.500h742"/>
          <path d="M987.500 269v395"/>
        </g>
        <path class="cad-dark" d="M620.500 269v408M776.500 269v408M811.500 269v408M838.500 269v408"/>
        <path d="M604 492l5 8h-10z" fill="none" stroke="#ff0" stroke-width="2"/>

        <text class="cad-text" x="274" y="215">3</text>
        <text class="cad-text" x="393" y="215">4</text>
        <text class="cad-text" x="631" y="215">5</text>
        <text class="cad-text" x="750" y="215">6</text>
        <text class="cad-text" x="868" y="215">7</text>
        <text class="cad-text" x="626" y="239">300</text>
        <text class="cad-text" x="765" y="239">750</text>
        <text class="cad-text" x="795" y="239">950</text>
        <text class="cad-text" x="826" y="239">750</text>
        <text class="cad-text" x="1163" y="275">E</text>
        <text class="cad-text" x="1163" y="361">D</text>
        <text class="cad-text" x="1163" y="503">C</text>
        <text class="cad-text" x="1163" y="599">B</text>
        <text class="cad-text" x="1163" y="643">A</text>
        <text class="cad-text" x="988" y="670">8</text>
        <text class="cad-text" transform="rotate(-90 1065 311)" x="1065" y="311">2400</text>
        <text class="cad-text" transform="rotate(-90 1065 425)" x="1065" y="425">3920</text>
        <text class="cad-text" transform="rotate(-90 1065 544)" x="1065" y="544">2680</text>
        <text class="cad-text" transform="rotate(-90 1065 613)" x="1065" y="613">1200</text>
        <text class="cad-text" transform="rotate(-90 1120 512)" x="1120" y="512">13600</text>

        <path d="M301 626v-40" stroke="#0f0" stroke-width="3"/>
        <path d="M301 580l-4 8h8z" fill="#0f0"/>
        <path d="M301 626.500h40" stroke="#f00" stroke-width="3"/>
        <path d="M350 627l-9-4v8z" fill="#f00"/>
        <path d="M310 580l8 10M318 580l-4 5v5" stroke="#0a0" fill="none"/>
        <path d="M338 606l10 10M348 606l-10 10" stroke="#f00"/>
      </svg>

      <div class="bar-line line-snap">
        <div class="tool-group group-snap">
          <i class="grip"></i>
          <span class="tool"><svg class="ic"><use href="#i-ortho"/></svg>正交</span>
          <span class="tool pressed snap-btn"><svg class="ic"><use href="#i-snap"/></svg>对象捕捉</span>
          <span class="tool pressed snap-btn"><svg class="ic"><use href="#i-dyn"/></svg>动态输入</span>
          <i class="grip snap-grip"></i>
          <span class="tool snap-cross"><svg class="ic"><use href="#i-cross"/></svg>交点</span>
          <span class="tool pressed snap-pt"><svg class="ic"><use href="#i-perp"/></svg>垂点</span>
          <span class="tool pressed snap-pt"><svg class="ic"><use href="#i-mid"/></svg>中点</span>
          <span class="tool"><svg class="ic"><use href="#i-vertex"/></svg>顶点</span>
          <span class="tool"><svg class="ic"><use href="#i-coord"/></svg>坐标</span>
        </div>
      </div>
    </div>
  </div>

  <div class="status-bar">
    <div class="status-cell cell-xy"><span class="lat">X=60269 Y=44392</span></div>
    <div class="status-cell cell-height">层高<span class="lat">:3.55m</span></div>
    <div class="status-cell cell-bottom">底标高<span class="lat">:-3.58m</span></div>
    <div class="status-cell cell-zero"><span class="lat">0</span></div>
    <div class="status-cell cell-hint">按鼠标左键指定第一个角点，或拾取构件图元</div>
    <div class="status-cell cell-fps"><span class="lat">67.6 FPS</span></div>
  </div>

  <div class="taskbar">
    <div class="start-btn">
      <svg class="start-logo" viewBox="0 0 16 16"><path d="M0 2.300l6.500-.9v6.200H0zM7.300 1.300L16 0v7.600H7.300zM0 8.400h6.500v6.200L0 13.700zM7.300 8.400H16V16l-8.700-1.200z" fill="#fff"/></svg>
    </div>
    <div class="search-box">
      <i class="search-ring"></i>
      <span class="search-text">在这里输入你要搜索的内容</span>
      <svg class="search-mic" viewBox="0 0 16 20"><rect x="5" y="1" width="6" height="11" rx="3" fill="none" stroke="#999"/><path d="M2 9q0 6 6 6t6-6M8 15v4M4 19h8" stroke="#999" fill="none"/></svg>
    </div>
    <div class="task-apps">
      <span class="task-app fan"><svg class="task-ic"><use href="#b-fan"/></svg></span>
      <span class="task-app"><svg class="task-ic"><use href="#b-swirl"/></svg></span>
      <span class="task-app"><svg class="task-ic"><use href="#b-edge"/></svg></span>
      <span class="task-app"><svg class="task-ic"><use href="#b-store"/></svg></span>
      <span class="task-app"><svg class="task-ic"><use href="#b-files"/></svg></span>
      <span class="task-app open"><svg class="task-ic"><use href="#b-gl"/></svg></span>
      <span class="task-app open"><svg class="task-ic"><use href="#b-ie"/></svg></span>
      <span class="task-app open"><svg class="task-ic"><use href="#b-pic"/></svg></span>
      <span class="task-app open"><svg class="task-ic"><use href="#b-notes"/></svg></span>
      <span class="task-app open current"><svg class="task-ic"><use href="#b-app"/></svg></span>
      <span class="task-app open"><svg class="task-ic"><use href="#b-help"/></svg></span>
    </div>
    <div class="tray">
      <div class="tray-cpu"><span>69%</span><span>CPU使用</span></div>
      <span class="tray-slot"><svg class="tray-ic" viewBox="0 0 16 16"><path d="M2 10l6-6 6 6" stroke="#fff" fill="none"/></svg></span>
      <span class="tray-slot"><svg class="tray-ic" viewBox="0 0 16 16"><rect x="3" y="5" width="12" height="8" fill="#ddd" stroke="#fff"/><path d="M0 2l3 3v8" stroke="#fff" fill="none"/></svg></span>
      <span class="tray-slot"><svg class="tray-ic" viewBox="0 0 16 16"><path d="M1 14a13 13 0 0 1 13-13M4 14a10 10 0 0 1 10-10M7 14a7 7 0 0 1 7-7M10 14a4 4 0 0 1 4-4" stroke="#ddd" fill="none"/></svg></span>
      <span class="tray-slot"><svg class="tray-ic" viewBox="0 0 16 16"><path d="M1 6h3l4-4v12l-4-4H1z" fill="none" stroke="#fff"/><path d="M10 5q2 3 0 6M12 3q4 5 0 10" stroke="#ccc" fill="none"/></svg></span>
      <span class="tray-slot tray-zh">中</span>
      <span class="tray-slot"><span class="tray-sogou">S</span></span>
      <div class="tray-clock"><span>11:29</span><span>2017/6/16</span></div>
      <div class="tray-note">
        <svg class="note-ic" viewBox="0 0 16 16"><path d="M0 0h16v12H6l-3 4v-4H0z" fill="#fff"/><path d="M3 3h10M3 6h10M3 9h10" stroke="#111"/></svg>
        <span class="note-badge">8</span>
      </div>
    </div>
  </div>
</body>
</html>
```

FILE: styles.css
```css
* {
  margin: 0;
  padding: 0;
  box-sizing: border-box;
}

html, body {
  width: 1366px;
  height: 768px;
  overflow: hidden;
}

body {
  position: relative;
  display: flex;
  flex-direction: column;
  background: #f0f0f0;
  color: #222;
  font-family: "Noto Sans", "Noto Sans CJK SC", sans-serif;
  font-size: 12px;
  line-height: 16px;
}

.sprite {
  position: absolute;
  width: 0;
  height: 0;
}

.ic {
  width: 16px;
  height: 16px;
  flex: none;
}

.ic.wide {
  width: 18px;
}

.lat {
  font-family: "DejaVu Sans Mono", monospace;
  font-size: 10px;
}

/* title bar */
.title-bar {
  height: 23px;
  background: #fff;
  display: flex;
  align-items: center;
  padding-left: 2px;
}

.title-icon {
  margin-right: 5px;
}

.title-text {
  white-space: nowrap;
  letter-spacing: 0.3px;
}

.win-controls {
  margin-left: auto;
  display: flex;
  align-items: center;
  gap: 35px;
  padding-right: 19px;
}

.win-min {
  width: 10px;
  height: 1px;
  background: #222;
}

.win-max {
  width: 10px;
  height: 10px;
  border: 1px solid #222;
  box-shadow: 2px -2px 0 -1px #fff, 2px -2px 0 0 #222;
}

.win-close {
  width: 11px;
  height: 11px;
}

.score-badge {
  position: absolute;
  left: 1110px;
  top: -23px;
  width: 42px;
  height: 42px;
  border-radius: 50%;
  background: #33b34a;
  border: 2px solid #e8eeea;
  box-shadow: 0 1px 3px rgba(0, 0, 0, 0.5);
  color: #fff;
  font-weight: 700;
  font-size: 11px;
  text-align: center;
  padding-top: 22px;
}

/* menu */
.menu-bar {
  height: 31px;
  background: #f5f5f5;
  display: flex;
  align-items: center;
  padding: 0 0 2px 7px;
  white-space: nowrap;
}

.menu-item {
  margin-right: 11.2px;
}

.menu-right {
  margin-left: auto;
  display: flex;
  align-items: center;
  padding-right: 9px;
}

.bell {
  margin-right: 31px;
}

.more {
  font-size: 13px;
  font-weight: 700;
  line-height: 10px;
  align-self: flex-start;
  margin-top: 2px;
}

.ime-bar {
  position: absolute;
  left: 950px;
  top: 19px;
  width: 163px;
  height: 24px;
  background: #f4f8fc;
  border: 1px solid #b4cce4;
  display: flex;
  align-items: center;
  gap: 6px;
  padding-left: 10px;
}

.ime-logo {
  position: absolute;
  left: -23px;
  top: -3px;
  width: 26px;
  height: 26px;
  border-radius: 6px;
  background: #ef4f23;
  color: #fff;
  font: italic 700 22px/26px "Liberation Sans", sans-serif;
  text-align: center;
  transform: rotate(-10deg);
}

.ime-zh {
  color: #1a78d0;
  font-size: 14px;
  font-weight: 700;
  margin-right: 4px;
}

.ime-dot {
  color: #1a78d0;
  font-weight: 700;
  width: 12px;
  margin-right: 2px;
}

.ime-ic {
  width: 16px;
  height: 16px;
}

/* toolbars */
.tool-row {
  height: 26px;
  display: flex;
  gap: 3px;
  margin-bottom: 4px;
}

.tool-group {
  height: 26px;
  padding-top: 1px;
  background: linear-gradient(#fcfcfc, #eeeeee);
  border-radius: 3px;
  display: flex;
  align-items: center;
  white-space: nowrap;
}

.group-file {
  width: 150px;
  padding-left: 4px;
}

.group-file .ic {
  margin-right: 6px;
}

.group-file > .ic:first-child {
  margin-right: 8px;
}

.group-file .tool .ic {
  margin-right: 0;
}

.group-file .more {
  margin-left: 14px;
}

.group-main {
  width: 547px;
  padding-left: 4px;
}

.group-main .tool {
  margin-right: 7px;
}

.group-main .more {
  margin-left: auto;
  margin-right: 3px;
}

.group-view {
  flex: 1;
  padding-left: 2px;
}

.group-view .tool {
  margin-right: 7.5px;
}

.group-view .more {
  margin-left: auto;
  margin-right: 9px;
}

.tool {
  display: flex;
  align-items: center;
  gap: 4px;
  margin-right: 8px;
  flex: none;
}

.off {
  color: #9a9a9a;
}

.sigma {
  width: 16px;
  font-size: 15px;
  font-weight: 700;
  text-align: center;
  color: #111;
}

.sep {
  width: 1px;
  height: 20px;
  background: #b8b8b8;
  margin: 0 6px 0 -1px;
  flex: none;
}

.caret {
  width: 0;
  height: 0;
  border-left: 3.5px solid transparent;
  border-right: 3.5px solid transparent;
  border-top: 4px solid #222;
  margin-left: 1px;
  flex: none;
}

.caret.tight {
  margin-left: -2px;
}

.grip {
  width: 2px;
  height: 16px;
  margin: 0 2px 0 3px;
  background: repeating-linear-gradient(#aaa 0 2px, transparent 2px 4px);
  flex: none;
}

.view-combo {
  width: 61px;
  height: 24px;
  background: #fff;
  display: flex;
  align-items: center;
  gap: 1px;
  padding-left: 3px;
  margin-right: 5px;
  flex: none;
}

.view-combo .caret {
  margin-left: 7px;
}

.pressed {
  background: #e6f1fb;
  border: 1px solid #3e9ae0;
}

/* nav panel */
.workspace {
  height: 622px;
  display: flex;
}

.nav-panel {
  width: 242px;
  display: flex;
  flex-direction: column;
  flex: none;
}

.nav-head {
  height: 15px;
  background: #0a58e0;
  color: #fff;
  display: flex;
  align-items: center;
  letter-spacing: 0.6px;
  margin-bottom: 2px;
}

.nav-pin {
  width: 9px;
  height: 12px;
  margin-left: auto;
}

.nav-close {
  width: 9px;
  height: 9px;
  margin: 0 5px 0 13px;
}

.nav-btn {
  height: 21px;
  margin: 0 1px 1px;
  background: #f1f1f1;
  border: 1px solid #a8a8a8;
  box-shadow: inset 0 0 0 1px #fafafa;
  text-align: center;
  line-height: 21px;
}

.tree-tools {
  height: 27px;
  margin: 0 2px;
  padding: 1px 0 0 5px;
  background: linear-gradient(#fafafa, #efefef);
  display: flex;
  align-items: center;
  gap: 7px;
}

.tree {
  height: 488px;
  margin: 0 2px 1px;
  background: #fff;
  border: 1px solid #777;
  padding-top: 2px;
}

.tree-row {
  height: 16px;
  display: flex;
  align-items: center;
  padding-left: 8px;
  white-space: nowrap;
}

.tree-row > span {
  margin-left: 5px;
}

.chev {
  width: 8px;
  height: 8px;
  flex: none;
  border-top: 2px solid #aaa;
  border-right: 2px solid #aaa;
  transform: scale(0.85) rotate(45deg);
}

.chev.down {
  border-color: #444;
  transform: scale(0.85) translateY(-2px) rotate(135deg);
}

.dots {
  width: 7px;
  border-top: 1px dotted #777;
  flex: none;
}

.tree-kids {
  position: relative;
}

.tree-kids::before,
.tree-kids::after {
  content: "";
  position: absolute;
  top: 0;
  bottom: 8px;
  border-left: 1px dotted #777;
}

.tree-kids::before {
  left: 12px;
}

.tree-kids::after {
  left: 31px;
}

.tree-leaf {
  position: relative;
  height: 16px;
  padding-left: 40px;
  white-space: nowrap;
}

.tree-leaf::before {
  content: "";
  position: absolute;
  left: 32px;
  top: 8px;
  width: 8px;
  border-top: 1px dotted #777;
}

.leaf-body {
  position: relative;
  display: inline-flex;
  align-items: center;
  gap: 5px;
  height: 16px;
  padding: 0 4px 0 2px;
}

.leaf-body.active {
  background: #d9d9d9;
}

.cad-ic {
  margin-left: 6px;
}

.tree-row > .new-tag {
  margin-left: -1px;
  height: 10px;
  padding: 0 1px;
  background: #ffe100;
  color: #222;
  font: 700 9px/10px "Liberation Sans", sans-serif;
  align-self: flex-start;
}

/* work area */
.work-area {
  flex: 1;
  min-width: 0;
  padding-left: 4px;
  display: flex;
  flex-direction: column;
}

.bar-line {
  height: 26px;
  margin-bottom: 2px;
  padding-left: 2px;
  display: flex;
  gap: 3px;
}

.line-offset {
  padding-left: 627px;
}

.line-draw {
  margin: 1px 0 2px;
}

.line-snap {
  margin: 2px 0 0;
}

.group-offset {
  width: 410px;
  padding-top: 0;
  background: #f6f6f6;
}

.group-offset .sep {
  margin-right: 3px;
}

.combo {
  height: 22px;
  background: #fff;
  display: flex;
  align-items: center;
  padding-left: 2px;
  flex: none;
}

.combo .caret {
  margin-left: auto;
  margin-right: 3px;
}

.combo-offset {
  width: 59px;
  margin-right: 5px;
}

.label-x {
  margin-left: -1px;
  width: 16px;
}

.unit {
  margin: 0 4px 0 2px;
}

.label-y {
  width: 17px;
}

.spin {
  height: 22px;
  border: 1px solid #777;
  background: #f4f4f4;
  color: #9a9a9a;
  display: flex;
  align-items: center;
  justify-content: flex-end;
  font-size: 13px;
  flex: none;
  margin-left: 2px;
}

.spin-xy {
  width: 57px;
}

.spin-rot {
  width: 67px;
  margin-right: 5px;
}

.spin-arrows {
  position: relative;
  width: 8px;
  height: 16px;
  margin: 0 5px 0 10px;
}

.spin-arrows::before,
.spin-arrows::after {
  content: "";
  position: absolute;
  left: 1px;
  border-left: 3px solid transparent;
  border-right: 3px solid transparent;
}

.spin-arrows::before {
  top: 2px;
  border-bottom: 3px solid #777;
}

.spin-arrows::after {
  bottom: 2px;
  border-top: 3px solid #777;
}

.check-box {
  width: 11px;
  height: 11px;
  margin-left: 1px;
  border: 1px solid #888;
  background: #fff;
  flex: none;
}

.rotate-label {
  margin: 0 3px 0 9px;
}

.group-edit {
  width: 788px;
}

.group-edit .grip {
  margin-right: 4px;
}

.group-edit .tool {
  margin-right: 7px;
}

.group-type {
  width: 637px;
}

.group-type .tool {
  margin-right: 7px;
}

.combo-floor,
.combo-wide {
  margin-right: 2px;
}

.combo-floor {
  width: 57px;
  margin-right: 3px;
}

.combo-wide {
  width: 70px;
}

.group-type .sep {
  margin-left: 1px;
}

.group-blank {
  width: 30px;
  margin-right: -1px;
}

.blank-box {
  width: 22px;
  height: 22px;
  background: #fff;
  margin-left: -2px;
}

.group-axis {
  width: 422px;
}

.group-axis .grip {
  margin-right: 5px;
}

.group-axis .tool {
  margin-right: 7.5px;
}

.group-draw {
  width: 1032px;
  padding-left: 6px;
}

.group-draw .tool {
  margin-right: 7.2px;
}

.group-draw .select-btn {
  height: 24px;
  width: 50px;
  padding-left: 6px;
  gap: 0;
  margin-right: 2px;
  border-color: #7db4e0;
}

.select-btn .ic {
  margin-right: 6px;
  width: 11px;
}

.select-caret {
  margin: 0 6px 0 1px;
}

.combo-box {
  width: 56px;
  height: 22px;
  margin-left: -2px;
  background: #fff;
  border: 1px solid #888;
  display: flex;
  align-items: center;
  justify-content: flex-end;
  padding-right: 3px;
  margin-right: 4px;
  flex: none;
}

.cad {
  width: 1120px;
  height: 480px;
  display: block;
  flex: none;
}

.cad-text {
  fill: #cfcfcf;
  font-family: "Liberation Sans", sans-serif;
  font-size: 15.5px;
  text-anchor: middle;
}

.cad-green {
  stroke: #0a8a0a;
  fill: none;
}

.cad-red {
  stroke: #f00;
  fill: none;
}

.cad-dark {
  stroke: #8f0000;
  fill: none;
}

.cad-pile {
  fill: #f500f0;
  stroke: #fff;
}

.group-snap {
  width: 474px;
  padding-top: 0;
}

.group-snap .grip {
  margin-right: 4px;
}

.snap-btn {
  height: 22px;
  margin-right: 1px;
  padding-left: 2px;
  width: 74px;
}

.snap-btn:nth-of-type(2) {
  margin-left: -4px;
}

.group-snap .snap-grip {
  margin-left: 6px;
}

.group-snap .snap-cross {
  margin-right: 4px;
}

.group-snap .snap-pt {
  height: 22px;
  margin-right: 0;
  padding-left: 3px;
  width: 50px;
}

.snap-pt + .tool {
  margin-left: 3px;
}

/* status bar */
.status-bar {
  height: 22px;
  padding: 1px 0 1px 1px;
  display: flex;
  gap: 2px;
}

.status-cell {
  height: 20px;
  background: linear-gradient(#fcfcfc, #f2f2f2);
  border: 1px solid #ddd;
  padding-left: 1px;
  line-height: 19px;
  white-space: nowrap;
  flex: none;
}

.cell-xy {
  width: 147px;
}

.cell-height {
  width: 78px;
}

.cell-bottom {
  width: 98px;
}

.cell-zero {
  width: 48px;
}

.cell-hint {
  flex: 1;
}

.cell-fps {
  width: 70px;
}

/* taskbar */
.taskbar {
  height: 40px;
  background: #04111a;
  display: flex;
  flex: none;
}

.start-btn {
  width: 48px;
  display: flex;
  align-items: center;
  justify-content: center;
  flex: none;
}

.start-logo {
  width: 16px;
  height: 16px;
}

.search-box {
  width: 344px;
  background: #383838;
  display: flex;
  align-items: center;
  padding-left: 11px;
  flex: none;
}

.search-ring {
  width: 18px;
  height: 18px;
  border: 2px solid #eee;
  border-radius: 50%;
  margin-right: 7px;
  flex: none;
}

.search-text {
  color: #999;
  font-size: 14px;
}

.search-mic {
  width: 16px;
  height: 20px;
  margin-left: auto;
  margin-right: 13px;
}

.task-apps {
  display: flex;
  margin-left: 7px;
}

.task-app {
  position: relative;
  width: 49px;
  display: flex;
  align-items: center;
  justify-content: center;
}

.task-ic {
  width: 24px;
  height: 24px;
}

.fan .task-ic {
  margin-right: 10px;
}

.task-app.open::after {
  content: "";
  position: absolute;
  left: 5px;
  right: 4px;
  bottom: 0;
  height: 2px;
  background: #76b9ed;
}

.task-app.current {
  background: #3a4a50;
}

.task-app.current::after {
  left: 0;
  right: 0;
}

.tray {
  margin-left: auto;
  display: flex;
  color: #fff;
}

.tray-cpu,
.tray-clock {
  display: flex;
  flex-direction: column;
  align-items: center;
  justify-content: center;
  gap: 3px;
  flex: none;
}

.tray-cpu {
  width: 84px;
}

.tray-slot {
  width: 24px;
  display: flex;
  align-items: center;
  justify-content: center;
  flex: none;
}

.tray-ic {
  width: 16px;
  height: 16px;
}

.tray-zh {
  font-size: 14px;
}

.tray-sogou {
  width: 15px;
  height: 17px;
  border-radius: 3px;
  background: #f0542a;
  font: 700 14px/17px "Liberation Sans", sans-serif;
  text-align: center;
}

.tray-clock {
  width: 88px;
}

.tray-note {
  position: relative;
  width: 44px;
  flex: none;
}

.note-ic {
  width: 16px;
  height: 16px;
  margin: 9px 0 0 4px;
}

.note-badge {
  position: absolute;
  left: 11px;
  top: 17px;
  width: 17px;
  height: 17px;
  border-radius: 50%;
  background: #444;
  border: 1px solid #ccc;
  font-size: 11px;
  font-weight: 700;
  line-height: 15px;
  text-align: center;
}
```
